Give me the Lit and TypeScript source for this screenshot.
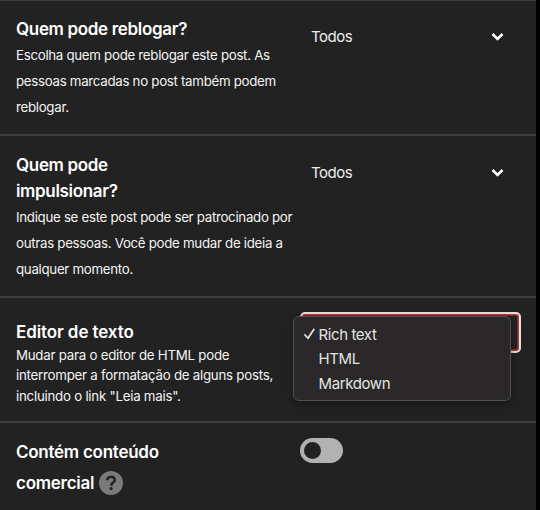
import { LitElement, html, css } from "lit";
import { customElement } from "lit/decorators.js";

const chevron = html`<svg class="chevron" width="13" height="10" viewBox="0 0 13 10">
  <path d="M1.5 2 L6.5 7 L11.5 2" fill="none" stroke="#fff" stroke-width="2.5" />
</svg>`;

@customElement("app-root")
export class AppRoot extends LitElement {
  static styles = css`
    :host {
      display: block;
      width: 540px;
      height: 510px;
      overflow: hidden;
      background: #000;
      color: #fff;
      font-family: Inter, "Liberation Sans", sans-serif;
    }
    .panel {
      width: 536px;
      height: 510px;
      box-sizing: border-box;
      background: #222;
      border-top: 1px solid #3c3c3c;
    }
    .row {
      display: flex;
      box-sizing: border-box;
      padding: 16px 16px 0;
      border-bottom: 2px solid #3e3e3e;
    }
    .reblog { height: 135px; padding-top: 15px; }
    .boost { height: 162px; }
    .editor { height: 125px; padding-top: 21px; }
    .commercial { height: 87px; border: 0; padding-top: 14px; }
    .text { width: 284px; flex: none; white-space: nowrap; }
    h2 {
      margin: 0;
      font-size: 17px;
      font-weight: 600;
      line-height: 26px;
      letter-spacing: -0.33px;
    }
    p {
      margin: 0;
      font-size: 13.3px;
      line-height: 26px;
      letter-spacing: -0.3px;
      color: #f4f4f4;
    }
    .editor h2 { letter-spacing: -0.1px; }
    .editor p { line-height: 20.4px; letter-spacing: -0.25px; }
    .commercial h2 { line-height: 30.5px; letter-spacing: -0.26px; }
    .heading-end { display: flex; align-items: center; gap: 5px; }
    .select {
      display: flex;
      flex: 1;
      height: 41px;
      align-items: center;
      justify-content: space-between;
      padding: 0 16px 0 11px;
      font-size: 15px;
      letter-spacing: -0.5px;
      color: #eee;
    }
    .control { flex: 1; position: relative; }
    .focused {
      box-sizing: border-box;
      width: 221px;
      height: 41px;
      margin-top: -7px;
      border: 2px solid #e6dedc;
      border-radius: 5px;
      box-shadow: inset 0 0 0 1.5px #c23c3a;
    }
    .menu {
      position: absolute;
      left: -7px;
      top: -3px;
      width: 218px;
      height: 85px;
      box-sizing: border-box;
      padding: 5px 10px;
      border: 1px solid #525050;
      border-radius: 6px;
      background: #2a2828;
      box-shadow: 0 3px 10px #0005;
      font-size: 15px;
      letter-spacing: -0.4px;
      color: #e4e4e4;
    }
    .option { display: flex; height: 24.6px; align-items: center; }
    .mark { width: 14.5px; display: flex; }
    .toggle {
      width: 43px;
      height: 25px;
      box-sizing: border-box;
      margin: 1px 0 0;
      padding: 4px;
      border-radius: 13px;
      background: #b2b2b2;
    }
    .knob { width: 17px; height: 17px; border-radius: 50%; background: #222; }
  `;

  render() {
    return html`
      <div class="panel">
        <div class="row reblog">
          <div class="text">
            <h2>Quem pode reblogar?</h2>
            <p>Escolha quem pode reblogar este post. As<br />pessoas marcadas no post também podem<br />reblogar.</p>
          </div>
          <div class="select"><span>Todos</span>${chevron}</div>
        </div>
        <div class="row boost">
          <div class="text">
            <h2>Quem pode<br />impulsionar?</h2>
            <p>Indique se este post pode ser patrocinado por<br />outras pessoas. Você pode mudar de ideia a<br />qualquer momento.</p>
          </div>
          <div class="select"><span>Todos</span>${chevron}</div>
        </div>
        <div class="row editor">
          <div class="text">
            <h2>Editor de texto</h2>
            <p>Mudar para o editor de HTML pode<br />interromper a formatação de alguns posts,<br />incluindo o link "Leia mais".</p>
          </div>
          <div class="control">
            <div class="focused"></div>
            <div class="menu">
              ${["Rich text", "HTML", "Markdown"].map(
                (label, i) => html`<div class="option">
                  <span class="mark">${i === 0
                    ? html`<svg width="11" height="12" viewBox="0 0 11 12">
                        <path d="M1 7 L4 10.3 L9.8 1.5" fill="none" stroke="#e8e8e8" stroke-width="1.7" stroke-linecap="round" stroke-linejoin="round" />
                      </svg>`
                    : ""}</span>
                  <span>${label}</span>
                </div>`
              )}
            </div>
          </div>
        </div>
        <div class="row commercial">
          <div class="text">
            <h2>Contém conteúdo</h2>
            <h2 class="heading-end">
              <span>comercial</span>
              <svg width="24" height="24" viewBox="0 0 24 24">
                <circle cx="12" cy="12" r="12" fill="#7a7a7a" />
                <path d="M8.1 9.3 C8.3 4.7 15.8 4.9 15.8 8.9 C15.8 11.7 12.2 11.5 12.2 14.8" fill="none" stroke="#222" stroke-width="2.5" />
                <circle cx="12.1" cy="17.6" r="1.6" fill="#222" />
              </svg>
            </h2>
          </div>
          <div class="toggle"><div class="knob"></div></div>
        </div>
      </div>
    `;
  }
}
